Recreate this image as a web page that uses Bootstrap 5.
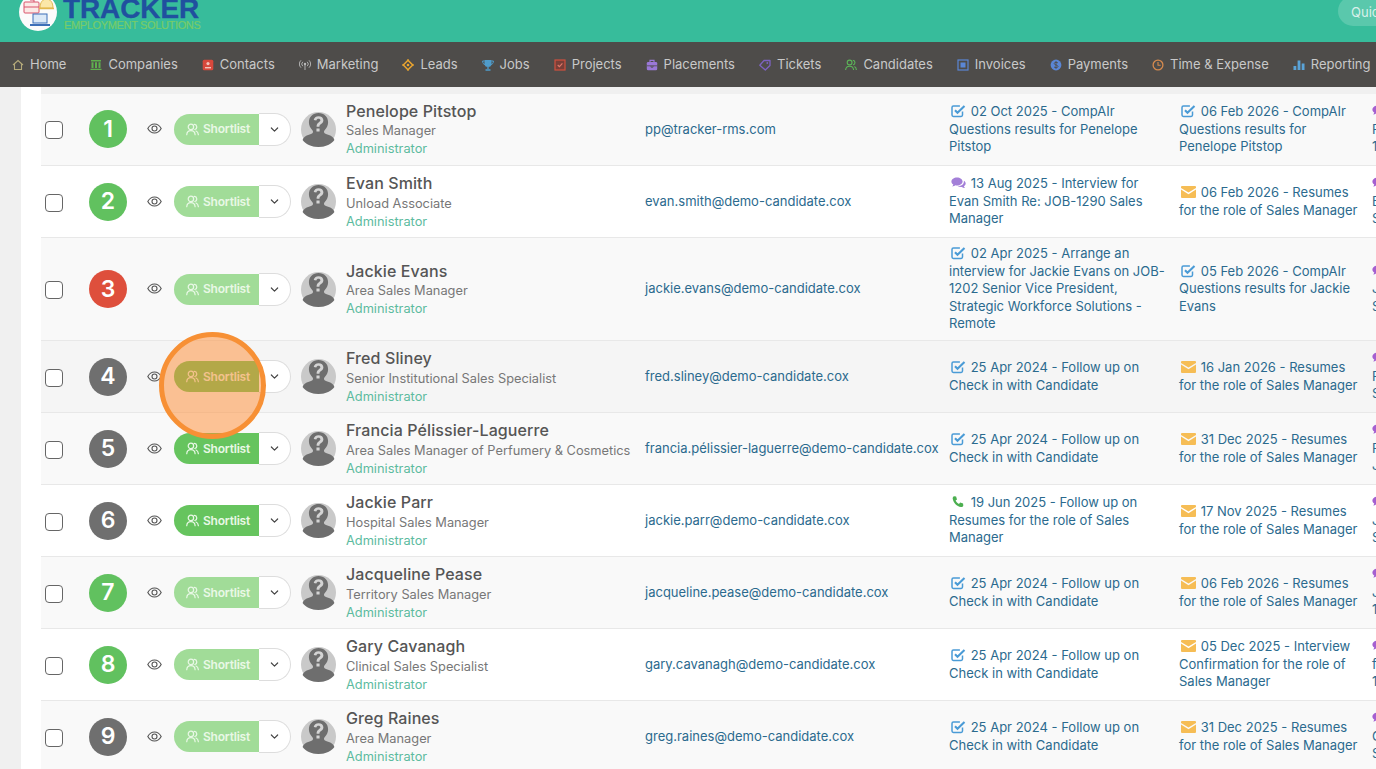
<!DOCTYPE html>
<html lang="en">
<head>
<meta charset="utf-8">
<title>Tracker</title>
<link href="https://cdn.jsdelivr.net/npm/bootstrap@5.3.0/dist/css/bootstrap.min.css" rel="stylesheet">
<style>
html,body{height:769px;overflow:hidden}
body{font-family:Inter,"Noto Sans",sans-serif;font-size:13px;color:#555;background:#f0f0f0}
.top-strip{height:42px;background:#37bc9b;overflow:hidden}
.logo-disc{width:38px;height:38px;margin:-7px 0 0 19px;flex:none}
.logo-words{margin:-2.5px 0 0 6px;font-family:"Liberation Sans",sans-serif;font-weight:700}
.logo-main{font-size:28px;line-height:22px;color:#20509f;letter-spacing:-.1px;height:22px;-webkit-text-stroke:.3px #20509f}
.logo-sub{font-size:11px;line-height:10px;color:#78cc68;font-weight:400;white-space:nowrap;letter-spacing:-.35px;margin:0 0 0 1px;-webkit-text-stroke:.2px #78cc68}
.quick-pill{flex:none;width:138px;height:30px;margin:-4px -100px 0 auto;padding:4px 0 0 13px;line-height:24px;border-radius:15px;background:#5ac8ac;color:#d8f0ea;white-space:nowrap;overflow:hidden}
.menu-bar{height:45px;background:#4e4c4a;flex-wrap:nowrap;overflow:hidden}
.menu-bar .nav-link{display:flex;align-items:center;height:45px;padding:0 12px;font-size:13px;color:#c9c9c9;white-space:nowrap}
.menu-bar svg{width:12px;height:12px;margin-right:6px;flex:none}
.work-area{padding-left:21px;height:682px}
.work-sheet{background:#fff;padding-left:20px;height:100%;overflow:hidden}
.work-gap{background:#f0f0f0;padding-top:6.5px;height:100%;overflow:hidden}
.cand-table{table-layout:fixed;width:1526px;margin:0;--bs-table-bg:#fff;--bs-table-color:#555;--bs-table-border-color:#e8e8e8}
.cand-table td{padding:7.25px 0;vertical-align:middle;line-height:17.5px;height:72px;box-shadow:none;background:var(--row-bg,#fff)}
.cand-table tbody tr:nth-child(odd){--row-bg:#f9f9f9}
.cand-table tbody tr.row-hover{--row-bg:#f5f5f5}
.w1{width:39px}.w2{width:56px}.w3{width:36px}.w4{width:124px}.w5{width:45px}.w6{width:299px}.w7{width:304px}.w8{width:230px}.w9{width:193px}.w10{width:200px}
.cand-table td.cell-in{padding-left:5px}
.cand-table td.cell-act{padding-left:5px;padding-right:5px}
.cand-table td.cell-act9{padding-left:5px;padding-right:9px}
.tick-box.form-check-input{width:18px;height:18px;margin:2px 0 0 4px;display:block;border:1px solid #666;border-radius:4px;float:none}
.num-disc{width:38px;height:38px;margin:0 auto;border-radius:50%;color:#fff;font-size:23px;font-weight:600;display:flex;align-items:center;justify-content:center;line-height:1}
.nd-green{background:#61c15f}.nd-gray{background:#6f6f6f}.nd-red{background:#de4f3c}
.eye-ico{width:15px;height:15px;display:block;margin:-1px auto 0}
.short-wrap{margin-left:2px;align-items:center}
.short-btn{width:85px;height:31px;padding:0 0 0 12px;display:flex;align-items:center;gap:4px;border:0;border-radius:15.5px 0 0 15.5px;background:#66c45e;color:#e9f8e6;font-size:12px;font-weight:600;line-height:1;letter-spacing:-.2px}
.short-btn.dim{background:#a1dc98}
.short-btn svg{width:13px;height:13px;flex:none}
.short-more{width:32px;height:33px;padding:0;border:1px solid #ddd;border-left:0;border-radius:0 16.5px 16.5px 0;background:#fff;display:flex;align-items:center;justify-content:center}
.short-more svg{width:9px;height:9px}
.face-ico{width:35px;height:35px;display:block;margin:0 auto}
.cand-name{font-size:16px;line-height:20px;font-weight:500;color:#555;letter-spacing:.1px;margin-bottom:1.25px}
.cand-role{line-height:18px;font-size:12.8px;color:#777;white-space:nowrap}
.cand-owner{line-height:18px;font-size:12.8px;color:#5dbb9f;margin-bottom:-.75px}
.mail-link,.act-link{color:#2b6a8e;text-decoration:none}
.mail-link{white-space:nowrap}
.act-ico{width:15px;height:14px;margin:-3px 5.2px 0 1.5px;vertical-align:middle}
.cell-in .act-ico{margin-left:0}
.click-ring{position:absolute;left:159px;top:332px;width:107px;height:107px;border-radius:50%;border:5px solid #f79035;background:rgba(255,140,50,.5);pointer-events:none}
</style>
</head>
<body>
<svg class="d-none" aria-hidden="true">
<defs>
<symbol id="i-check" viewBox="0 0 15 14"><path d="M11.500 7.500v3.500a1.400 1.400 0 0 1-1.400 1.400H2.400A1.400 1.400 0 0 1 1 11V3.500a1.400 1.400 0 0 1 1.400-1.400h6.500" fill="none" stroke="#4a9bd6" stroke-width="1.500"/><path d="M4 6.200l2.500 2.600L13.500 2" fill="none" stroke="#4a9bd6" stroke-width="2.100"/></symbol>
<symbol id="i-chat" viewBox="0 0 15 14"><path d="M6 1.500C2.900 1.500.4 3.200.4 5.500c0 1.200.7 2.300 1.900 3-.1.700-.6 1.500-1.100 2 1.200 0 2.400-.5 3.200-1.200.5.100 1 .2 1.600.2 3.100 0 5.600-1.700 5.600-4S9.100 1.500 6 1.500z" fill="#a37fd8"/><path d="M12.900 4.700c1.100.6 1.800 1.600 1.800 2.700 0 1.100-.7 2.100-1.800 2.700.1.800.6 1.400 1 1.900-1.100 0-2.200-.4-2.900-1.100-1.400.3-3.200 0-4.300-.8 3.900.1 6.500-2 6.200-5.400z" fill="#a37fd8"/></symbol>
<symbol id="i-chat2" viewBox="0 0 15 14"><path d="M6 1.500C2.900 1.500.4 3.200.4 5.500c0 1.200.7 2.300 1.900 3-.1.700-.6 1.500-1.100 2 1.200 0 2.400-.5 3.200-1.200 3.100.6 7.200-.9 7.200-3.800 0-2.300-2.500-4-5.600-4z" fill="#a45fd0"/></symbol>
<symbol id="i-mail" viewBox="0 0 15 14"><path d="M0 2.100A1 1 0 0 1 1 1.100h13a1 1 0 0 1 1 1v.8L7.500 7.600 0 2.900z" fill="#f6bd55"/><path d="M0 4.500l7.500 4.700L15 4.500v7.400a1 1 0 0 1-1 1H1a1 1 0 0 1-1-1z" fill="#f6bd55"/></symbol>
<symbol id="i-phone" viewBox="0 0 15 14"><path d="M3.100 1.200l2 .3.9 3-1.400 1c.7 1.500 1.800 2.700 3.400 3.500l1.100-1.400 3 1 .2 2.100c-.3.900-1.300 1.500-2.400 1.300C5.700 11.300 2.500 8 1.700 3.700 1.500 2.500 2.100 1.500 3.100 1.200z" fill="#4caf50"/></symbol>
<symbol id="i-eye" viewBox="0 0 15 15"><path d="M.8 7.500C2.400 4.600 4.700 3 7.500 3s5.100 1.600 6.700 4.500C12.600 10.400 10.300 12 7.500 12S2.400 10.400.8 7.500z" fill="none" stroke="#555" stroke-width="1.100"/><circle cx="7.500" cy="7.500" r="2.500" fill="none" stroke="#555" stroke-width="1.100"/></symbol>
<symbol id="i-team" viewBox="0 0 14 14"><circle cx="5.300" cy="4.200" r="2.900" fill="none" stroke="currentColor" stroke-width="1.300"/><path d="M.8 12.600c.2-2.800 1.800-4.300 4.500-4.300s4.300 1.500 4.500 4.300" fill="none" stroke="currentColor" stroke-width="1.300" stroke-linecap="round"/><path d="M9 1.500a2.800 2.800 0 0 1 .5 5.500M10.800 8.600c1.500.5 2.300 1.800 2.500 3.900" fill="none" stroke="currentColor" stroke-width="1.300" stroke-linecap="round"/></symbol>
<symbol id="i-down" viewBox="0 0 10 10"><path d="M1.500 3.300L5 6.800l3.500-3.500" fill="none" stroke="#444" stroke-width="1.300" stroke-linecap="round" stroke-linejoin="round"/></symbol>
<symbol id="i-face" viewBox="0 0 35 35"><circle cx="17.500" cy="17.500" r="17.500" fill="#c9c9c9"/><path d="M17.500 1c5.700 0 9.600 4 9.600 9.300 0 3.200-1.500 6-3.500 8-.6.700-.8 1.500-.5 2.200.4 1 2 1.500 4 2.200 3 1 5.800 2.500 6.300 5.300C30.400 31.900 25 35 17.500 35S4.600 31.900 1.600 28c.5-2.800 3.300-4.300 6.300-5.300 2-.7 3.600-1.200 4-2.200.3-.7.100-1.500-.5-2.200-2-2-3.500-4.800-3.500-8C7.900 5 11.800 1 17.500 1z" fill="#6e6e6e"/><g transform="translate(-6.300 -3.600) scale(1.360)"><path d="M14 8.500c.2-1.700 1.600-2.800 3.500-2.800 2.100 0 3.600 1.200 3.600 3 0 1.500-.9 2.200-1.900 2.900-.8.500-1 .9-1 1.900h-2.100c0-1.700.4-2.400 1.500-3.200.8-.6 1.300-.9 1.300-1.500s-.6-1.100-1.400-1.100-1.400.5-1.600 1.200zM16 14.700h2.300v2.200H16z" fill="#d4d4d4"/></g></symbol>
</defs>
</svg>

<header class="top-strip d-flex align-items-start">
  <svg class="logo-disc" viewBox="0 0 38 38" aria-hidden="true">
    <circle cx="19" cy="19" r="19" fill="#fbfbfb"/>
    <rect x="5" y="9" width="15" height="11" rx="1" fill="#fbe9e6" stroke="#d9536a" stroke-width="1"/><path d="M5 14h15M11 7h4v2" stroke="#d9536a" fill="none"/>
    <path d="M21 15c0-6 3-9 6.500-9s6.500 3 6.500 9z" fill="#fbe7a8" stroke="#e2b84e"/><path d="M20 15.500h15" stroke="#e2b84e" stroke-width="1.500"/>
    <rect x="14" y="21" width="14" height="9" fill="#dbe9f8" stroke="#3d6fb8"/><path d="M11 32h20" stroke="#3d6fb8" stroke-width="2"/>
  </svg>
  <div class="logo-words">
    <div class="logo-main">TRACKER</div>
    <div class="logo-sub">EMPLOYMENT SOLUTIONS</div>
  </div>
  <div class="quick-pill">Quick Search</div>
</header>

<ul class="nav menu-bar">
  <li class="nav-item"><a class="nav-link" href="#"><svg viewBox="0 0 12 12"><path d="M1 6l5-4.500L11 6M2.500 5.200v5.300h7V5.200" fill="none" stroke="#b5aa7a" stroke-width="1.100"/></svg>Home</a></li>
  <li class="nav-item"><a class="nav-link" href="#"><svg viewBox="0 0 12 12"><path d="M.5 11h11V9.800H.5zM1 1h10v1.400H1zM1.500 3.300h2v5.700h-2zM5 3.300h2v5.700H5zM8.500 3.300h2v5.700h-2z" fill="#5fb04e"/></svg>Companies</a></li>
  <li class="nav-item"><a class="nav-link" href="#"><svg viewBox="0 0 12 12"><rect x=".7" y=".7" width="10.600" height="10.600" rx="1.500" fill="#d8483c"/><circle cx="6" cy="4.600" r="1.600" fill="#f3c3bb"/><path d="M3 8.700h6" stroke="#f3c3bb" stroke-width="1.400"/></svg>Contacts</a></li>
  <li class="nav-item"><a class="nav-link" href="#"><svg viewBox="0 0 12 12"><circle cx="6" cy="5" r="1.200" fill="#bbb"/><path d="M6 6v5M3.800 2.800a3 3 0 0 0 0 4.400M8.200 2.800a3 3 0 0 1 0 4.400M2 1.300a5 5 0 0 0 0 7.400M10 1.300a5 5 0 0 1 0 7.400" fill="none" stroke="#bbb" stroke-width=".9"/></svg>Marketing</a></li>
  <li class="nav-item"><a class="nav-link" href="#"><svg viewBox="0 0 12 12"><path d="M6 1.300L10.700 6 6 10.700 1.300 6z" fill="none" stroke="#eba52f" stroke-width="1.500"/><circle cx="6" cy="6" r="1.300" fill="#eba52f"/><path d="M6 0v2M6 10v2M0 6h2M10 6h2" stroke="#eba52f"/></svg>Leads</a></li>
  <li class="nav-item"><a class="nav-link" href="#"><svg viewBox="0 0 12 12"><path d="M2.500 1h7v3.500a3.500 3.500 0 0 1-7 0z" fill="#4f9ccb"/><path d="M2.500 2H.6c0 2 .8 3.300 2.400 3.500M9.500 2h1.900c0 2-.8 3.300-2.400 3.500" fill="none" stroke="#4f9ccb"/><path d="M6 8v2M3.500 11h5" stroke="#4f9ccb" stroke-width="1.300"/></svg>Jobs</a></li>
  <li class="nav-item"><a class="nav-link" href="#"><svg viewBox="0 0 12 12"><rect x="1" y="1" width="10" height="10" fill="#7a3f38" stroke="#d0503f" stroke-width="1.200"/><path d="M3.700 6l1.700 1.700 3-3.300" fill="none" stroke="#e2796a" stroke-width="1.100"/></svg>Projects</a></li>
  <li class="nav-item"><a class="nav-link" href="#"><svg viewBox="0 0 12 12"><path d="M4 3V1.300h4V3" fill="none" stroke="#9a78d8" stroke-width="1.200"/><rect x=".8" y="3" width="10.400" height="8.200" rx="1.300" fill="#9a78d8"/><path d="M.8 6.800h10.400M5 6.800v1.400h2V6.800" stroke="#4e4c4a" fill="none" stroke-width=".8"/></svg>Placements</a></li>
  <li class="nav-item"><a class="nav-link" href="#"><svg viewBox="0 0 12 12"><path d="M.8 6.200L5 1.500h6v5L6.300 11z" fill="none" stroke="#7d62c2" stroke-width="1.300" stroke-linejoin="round"/><circle cx="8.300" cy="4" r=".9" fill="#7d62c2"/></svg>Tickets</a></li>
  <li class="nav-item"><a class="nav-link" href="#"><svg viewBox="0 0 12 12"><circle cx="4.600" cy="3.500" r="2.400" fill="none" stroke="#5cb658" stroke-width="1.100"/><path d="M.6 11c.2-2.500 1.600-3.800 4-3.800s3.800 1.300 4 3.800M7.800 1.200a2.400 2.400 0 0 1 .4 4.700M9.400 7.400c1.200.5 1.900 1.700 2 3.600" fill="none" stroke="#5cb658" stroke-width="1.100"/></svg>Candidates</a></li>
  <li class="nav-item"><a class="nav-link" href="#"><svg viewBox="0 0 12 12"><rect x="1" y="1" width="10" height="10" fill="none" stroke="#5a86d6" stroke-width="1.200"/><rect x="3.500" y="3.500" width="5" height="5" fill="#5a86d6"/></svg>Invoices</a></li>
  <li class="nav-item"><a class="nav-link" href="#"><svg viewBox="0 0 12 12"><circle cx="6" cy="6" r="5.400" fill="#5a86d6"/><path d="M8 4c-.5-.8-3.800-1.200-3.800.5C4.200 6.300 8 5.700 8 7.500c0 1.600-3.400 1.300-4 .4M6 2.200v7.600" fill="none" stroke="#4e4c4a" stroke-width=".9"/></svg>Payments</a></li>
  <li class="nav-item"><a class="nav-link" href="#"><svg viewBox="0 0 12 12"><circle cx="6" cy="6" r="4.900" fill="none" stroke="#d68a4e" stroke-width="1.300"/><path d="M6 3v3.200h2.700" fill="none" stroke="#d68a4e" stroke-width="1.100"/></svg>Time &amp; Expense</a></li>
  <li class="nav-item"><a class="nav-link" href="#"><svg viewBox="0 0 12 12"><path d="M.5 7h2.800v4H.5zM4.600 1.500h2.800V11H4.600zM8.700 4.500h2.800V11H8.700z" fill="#5aa3d8"/></svg>Reporting</a></li>
</ul>

<div class="work-area">
<div class="work-sheet">
<div class="work-gap">
<table class="table cand-table">
<colgroup><col class="w1"><col class="w2"><col class="w3"><col class="w4"><col class="w5"><col class="w6"><col class="w7"><col class="w8"><col class="w9"><col class="w10"></colgroup>
<tbody>

<tr>
<td><input class="form-check-input tick-box" type="checkbox" aria-label="Select"></td>
<td><div class="num-disc nd-green">1</div></td>
<td><svg class="eye-ico"><use href="#i-eye"/></svg></td>
<td><div class="d-flex short-wrap"><button class="btn short-btn dim" type="button"><svg><use href="#i-team"/></svg>Shortlist</button><button class="btn short-more" type="button" aria-label="More"><svg><use href="#i-down"/></svg></button></div></td>
<td><svg class="face-ico"><use href="#i-face"/></svg></td>
<td class="cell-in"><div class="cand-name">Penelope Pitstop</div><div class="cand-role">Sales Manager</div><div class="cand-owner">Administrator</div></td>
<td class="cell-in"><a class="mail-link" href="#">pp@tracker-rms.com</a></td>
<td class="cell-act"><a class="act-link" href="#"><svg class="act-ico"><use href="#i-check"/></svg>02 Oct 2025 - CompAIr Questions results for Penelope Pitstop</a></td>
<td class="cell-act9"><a class="act-link" href="#"><svg class="act-ico"><use href="#i-check"/></svg>06 Feb 2026 - CompAIr Questions results for Penelope Pitstop</a></td>
<td class="cell-in"><a class="act-link" href="#"><svg class="act-ico"><use href="#i-chat2"/></svg><br>Penelope Pitstop<br>12:00</a></td>
</tr>

<tr>
<td><input class="form-check-input tick-box" type="checkbox" aria-label="Select"></td>
<td><div class="num-disc nd-green">2</div></td>
<td><svg class="eye-ico"><use href="#i-eye"/></svg></td>
<td><div class="d-flex short-wrap"><button class="btn short-btn dim" type="button"><svg><use href="#i-team"/></svg>Shortlist</button><button class="btn short-more" type="button" aria-label="More"><svg><use href="#i-down"/></svg></button></div></td>
<td><svg class="face-ico"><use href="#i-face"/></svg></td>
<td class="cell-in"><div class="cand-name">Evan Smith</div><div class="cand-role">Unload Associate</div><div class="cand-owner">Administrator</div></td>
<td class="cell-in"><a class="mail-link" href="#">evan.smith@demo-candidate.cox</a></td>
<td class="cell-act"><a class="act-link" href="#"><svg class="act-ico"><use href="#i-chat"/></svg>13 Aug 2025 - Interview for Evan Smith Re: JOB-1290 Sales Manager</a></td>
<td class="cell-act9"><a class="act-link" href="#"><svg class="act-ico"><use href="#i-mail"/></svg>06 Feb 2026 - Resumes for the role of Sales Manager</a></td>
<td class="cell-in"><a class="act-link" href="#"><svg class="act-ico"><use href="#i-chat2"/></svg><br>Evan Smith<br>Sales Manager</a></td>
</tr>

<tr>
<td><input class="form-check-input tick-box" type="checkbox" aria-label="Select"></td>
<td><div class="num-disc nd-red">3</div></td>
<td><svg class="eye-ico"><use href="#i-eye"/></svg></td>
<td><div class="d-flex short-wrap"><button class="btn short-btn dim" type="button"><svg><use href="#i-team"/></svg>Shortlist</button><button class="btn short-more" type="button" aria-label="More"><svg><use href="#i-down"/></svg></button></div></td>
<td><svg class="face-ico"><use href="#i-face"/></svg></td>
<td class="cell-in"><div class="cand-name">Jackie Evans</div><div class="cand-role">Area Sales Manager</div><div class="cand-owner">Administrator</div></td>
<td class="cell-in"><a class="mail-link" href="#">jackie.evans@demo-candidate.cox</a></td>
<td class="cell-act"><a class="act-link" href="#"><svg class="act-ico"><use href="#i-check"/></svg>02 Apr 2025 - Arrange an interview for Jackie Evans on JOB-1202 Senior Vice President, Strategic Workforce Solutions - Remote</a></td>
<td class="cell-act9"><a class="act-link" href="#"><svg class="act-ico"><use href="#i-check"/></svg>05 Feb 2026 - CompAIr Questions results for Jackie Evans</a></td>
<td class="cell-in"><a class="act-link" href="#"><svg class="act-ico"><use href="#i-chat2"/></svg><br>Jackie Evans<br>Sales Manager</a></td>
</tr>

<tr class="row-hover">
<td><input class="form-check-input tick-box" type="checkbox" aria-label="Select"></td>
<td><div class="num-disc nd-gray">4</div></td>
<td><svg class="eye-ico"><use href="#i-eye"/></svg></td>
<td><div class="d-flex short-wrap"><button class="btn short-btn" type="button"><svg><use href="#i-team"/></svg>Shortlist</button><button class="btn short-more" type="button" aria-label="More"><svg><use href="#i-down"/></svg></button></div></td>
<td><svg class="face-ico"><use href="#i-face"/></svg></td>
<td class="cell-in"><div class="cand-name">Fred Sliney</div><div class="cand-role">Senior Institutional Sales Specialist</div><div class="cand-owner">Administrator</div></td>
<td class="cell-in"><a class="mail-link" href="#">fred.sliney@demo-candidate.cox</a></td>
<td class="cell-act"><a class="act-link" href="#"><svg class="act-ico"><use href="#i-check"/></svg>25 Apr 2024 - Follow up on Check in with Candidate</a></td>
<td class="cell-act9"><a class="act-link" href="#"><svg class="act-ico"><use href="#i-mail"/></svg>16 Jan 2026 - Resumes for the role of Sales Manager</a></td>
<td class="cell-in"><a class="act-link" href="#"><svg class="act-ico"><use href="#i-chat2"/></svg><br>Fred Sliney<br>Sales Specialist</a></td>
</tr>

<tr>
<td><input class="form-check-input tick-box" type="checkbox" aria-label="Select"></td>
<td><div class="num-disc nd-gray">5</div></td>
<td><svg class="eye-ico"><use href="#i-eye"/></svg></td>
<td><div class="d-flex short-wrap"><button class="btn short-btn" type="button"><svg><use href="#i-team"/></svg>Shortlist</button><button class="btn short-more" type="button" aria-label="More"><svg><use href="#i-down"/></svg></button></div></td>
<td><svg class="face-ico"><use href="#i-face"/></svg></td>
<td class="cell-in"><div class="cand-name">Francia Pélissier-Laguerre</div><div class="cand-role">Area Sales Manager of Perfumery &amp; Cosmetics</div><div class="cand-owner">Administrator</div></td>
<td class="cell-in"><a class="mail-link" href="#">francia.pélissier-laguerre@demo-candidate.cox</a></td>
<td class="cell-act"><a class="act-link" href="#"><svg class="act-ico"><use href="#i-check"/></svg>25 Apr 2024 - Follow up on Check in with Candidate</a></td>
<td class="cell-act9"><a class="act-link" href="#"><svg class="act-ico"><use href="#i-mail"/></svg>31 Dec 2025 - Resumes for the role of Sales Manager</a></td>
<td class="cell-in"><a class="act-link" href="#"><svg class="act-ico"><use href="#i-chat2"/></svg><br>Francia<br>JOB-1290</a></td>
</tr>

<tr>
<td><input class="form-check-input tick-box" type="checkbox" aria-label="Select"></td>
<td><div class="num-disc nd-gray">6</div></td>
<td><svg class="eye-ico"><use href="#i-eye"/></svg></td>
<td><div class="d-flex short-wrap"><button class="btn short-btn" type="button"><svg><use href="#i-team"/></svg>Shortlist</button><button class="btn short-more" type="button" aria-label="More"><svg><use href="#i-down"/></svg></button></div></td>
<td><svg class="face-ico"><use href="#i-face"/></svg></td>
<td class="cell-in"><div class="cand-name">Jackie Parr</div><div class="cand-role">Hospital Sales Manager</div><div class="cand-owner">Administrator</div></td>
<td class="cell-in"><a class="mail-link" href="#">jackie.parr@demo-candidate.cox</a></td>
<td class="cell-act"><a class="act-link" href="#"><svg class="act-ico"><use href="#i-phone"/></svg>19 Jun 2025 - Follow up on Resumes for the role of Sales Manager</a></td>
<td class="cell-act9"><a class="act-link" href="#"><svg class="act-ico"><use href="#i-mail"/></svg>17 Nov 2025 - Resumes for the role of Sales Manager</a></td>
<td class="cell-in"><a class="act-link" href="#"><svg class="act-ico"><use href="#i-chat2"/></svg><br>Jackie Parr<br>Sales Manager</a></td>
</tr>

<tr>
<td><input class="form-check-input tick-box" type="checkbox" aria-label="Select"></td>
<td><div class="num-disc nd-green">7</div></td>
<td><svg class="eye-ico"><use href="#i-eye"/></svg></td>
<td><div class="d-flex short-wrap"><button class="btn short-btn dim" type="button"><svg><use href="#i-team"/></svg>Shortlist</button><button class="btn short-more" type="button" aria-label="More"><svg><use href="#i-down"/></svg></button></div></td>
<td><svg class="face-ico"><use href="#i-face"/></svg></td>
<td class="cell-in"><div class="cand-name">Jacqueline Pease</div><div class="cand-role">Territory Sales Manager</div><div class="cand-owner">Administrator</div></td>
<td class="cell-in"><a class="mail-link" href="#">jacqueline.pease@demo-candidate.cox</a></td>
<td class="cell-act"><a class="act-link" href="#"><svg class="act-ico"><use href="#i-check"/></svg>25 Apr 2024 - Follow up on Check in with Candidate</a></td>
<td class="cell-act9"><a class="act-link" href="#"><svg class="act-ico"><use href="#i-mail"/></svg>06 Feb 2026 - Resumes for the role of Sales Manager</a></td>
<td class="cell-in"><a class="act-link" href="#"><svg class="act-ico"><use href="#i-chat2"/></svg><br>Jacqueline<br>12:00</a></td>
</tr>

<tr>
<td><input class="form-check-input tick-box" type="checkbox" aria-label="Select"></td>
<td><div class="num-disc nd-green">8</div></td>
<td><svg class="eye-ico"><use href="#i-eye"/></svg></td>
<td><div class="d-flex short-wrap"><button class="btn short-btn dim" type="button"><svg><use href="#i-team"/></svg>Shortlist</button><button class="btn short-more" type="button" aria-label="More"><svg><use href="#i-down"/></svg></button></div></td>
<td><svg class="face-ico"><use href="#i-face"/></svg></td>
<td class="cell-in"><div class="cand-name">Gary Cavanagh</div><div class="cand-role">Clinical Sales Specialist</div><div class="cand-owner">Administrator</div></td>
<td class="cell-in"><a class="mail-link" href="#">gary.cavanagh@demo-candidate.cox</a></td>
<td class="cell-act"><a class="act-link" href="#"><svg class="act-ico"><use href="#i-check"/></svg>25 Apr 2024 - Follow up on Check in with Candidate</a></td>
<td class="cell-act9"><a class="act-link" href="#"><svg class="act-ico"><use href="#i-mail"/></svg>05 Dec 2025 - Interview Confirmation for the role of Sales Manager</a></td>
<td class="cell-in"><a class="act-link" href="#"><svg class="act-ico"><use href="#i-chat2"/></svg><br>for Gary<br>12:00</a></td>
</tr>

<tr>
<td><input class="form-check-input tick-box" type="checkbox" aria-label="Select"></td>
<td><div class="num-disc nd-gray">9</div></td>
<td><svg class="eye-ico"><use href="#i-eye"/></svg></td>
<td><div class="d-flex short-wrap"><button class="btn short-btn dim" type="button"><svg><use href="#i-team"/></svg>Shortlist</button><button class="btn short-more" type="button" aria-label="More"><svg><use href="#i-down"/></svg></button></div></td>
<td><svg class="face-ico"><use href="#i-face"/></svg></td>
<td class="cell-in"><div class="cand-name">Greg Raines</div><div class="cand-role">Area Manager</div><div class="cand-owner">Administrator</div></td>
<td class="cell-in"><a class="mail-link" href="#">greg.raines@demo-candidate.cox</a></td>
<td class="cell-act"><a class="act-link" href="#"><svg class="act-ico"><use href="#i-check"/></svg>25 Apr 2024 - Follow up on Check in with Candidate</a></td>
<td class="cell-act9"><a class="act-link" href="#"><svg class="act-ico"><use href="#i-mail"/></svg>31 Dec 2025 - Resumes for the role of Sales Manager</a></td>
<td class="cell-in"><a class="act-link" href="#"><svg class="act-ico"><use href="#i-chat2"/></svg><br>Greg Raines<br>Sales Manager</a></td>
</tr>

</tbody>
</table>
</div>
</div>
</div>

<div class="click-ring"></div>
<script src="https://cdn.jsdelivr.net/npm/bootstrap@5.3.0/dist/js/bootstrap.bundle.min.js"></script>
</body>
</html>
